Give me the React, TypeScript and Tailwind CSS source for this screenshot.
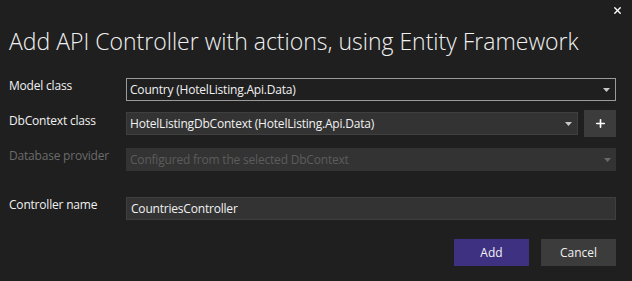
import { Plus, X } from "lucide-react";

const font = { fontFamily: '"Segoe UI", "Open Sans", "Liberation Sans", sans-serif' };

function Caret({ disabled }: { disabled?: boolean }) {
  return (
    <svg width="7" height="4" viewBox="0 0 7 4" className={disabled ? "text-[#6a6a6a]" : "text-[#c8c8c8]"}>
      <path d="M0 0 H7 L3.5 4 Z" fill="currentColor" />
    </svg>
  );
}

function Row({ label, disabled, labelOffset, children }: { label: string; disabled?: boolean; labelOffset?: boolean; children: React.ReactNode }) {
  return (
    <div className="flex items-start">
      <div
        className={`w-[117px] shrink-0 text-[12px] leading-[16px] tracking-[-0.2px] ${labelOffset ? "mt-[3px]" : ""} ${
          disabled ? "text-[#6b6b6b]" : "text-[#f1f1f1]"
        }`}
      >
        {label}
      </div>
      <div className="flex-1 flex items-center gap-[6px]">{children}</div>
    </div>
  );
}

export default function App() {
  return (
    <div className="w-[632px] h-[281px] bg-[#1f1f1f] relative overflow-hidden" style={font}>
      {/* close */}
      <button className="absolute top-[5px] right-[9px] text-white">
        <X className="w-[11px] h-[11px]" strokeWidth={3} />
      </button>

      <div className="pl-[9px] pr-[16px]">
        <h1 className="pt-[26px] text-[23px] leading-[30px] font-light text-[#f1f1f1]">
          Add API Controller with actions, using Entity Framework
        </h1>

        <div className="mt-[22px] flex flex-col">
          <Row label="Model class">
            <div className="flex-1 h-[23px] border border-[#9a9a9a] bg-[#1f1f1f] flex items-center justify-between pl-[3px] pr-[5px]">
              <span className="text-[12px] tracking-[-0.2px] text-[#f1f1f1]">Country (HotelListing.Api.Data)</span>
              <Caret />
            </div>
          </Row>

          <div className="mt-[9px]">
            <Row label="DbContext class" labelOffset>
              <div className="flex-1 h-[23px] border border-[#3f3f3f] bg-[#333333] flex items-center justify-between pl-[3px] pr-[5px]">
                <span className="text-[12px] tracking-[-0.2px] text-[#f1f1f1]">HotelListingDbContext (HotelListing.Api.Data)</span>
                <Caret />
              </div>
              <button className="w-[32px] h-[27px] bg-[#3c3c3c] flex items-center justify-center text-white">
                <Plus className="w-[13px] h-[13px]" strokeWidth={3} />
              </button>
            </Row>
          </div>

          <div className="mt-[11px]">
            <Row label="Database provider" disabled>
              <div className="flex-1 h-[23px] bg-[#333333] flex items-center justify-between pl-[4px] pr-[5px]">
                <span className="text-[12px] tracking-[-0.2px] text-[#5c5c5c]">Configured from the selected DbContext</span>
                <Caret disabled />
              </div>
            </Row>
          </div>

          <div className="mt-[26px]">
            <Row label="Controller name">
              <div className="flex-1 h-[23px] border border-[#3f3f3f] bg-[#333333] flex items-center pl-[4px]">
                <span className="text-[12px] tracking-[-0.2px] text-[#f1f1f1]">CountriesController</span>
              </div>
            </Row>
          </div>
        </div>

        <div className="mt-[19px] flex justify-end gap-[12px]">
          <button className="w-[75px] h-[27px] bg-[#3f3182] text-[12px] text-[#f1f1f1]">Add</button>
          <button className="w-[75px] h-[27px] bg-[#3c3c3c] text-[12px] text-[#f1f1f1]">Cancel</button>
        </div>
      </div>
    </div>
  );
}
